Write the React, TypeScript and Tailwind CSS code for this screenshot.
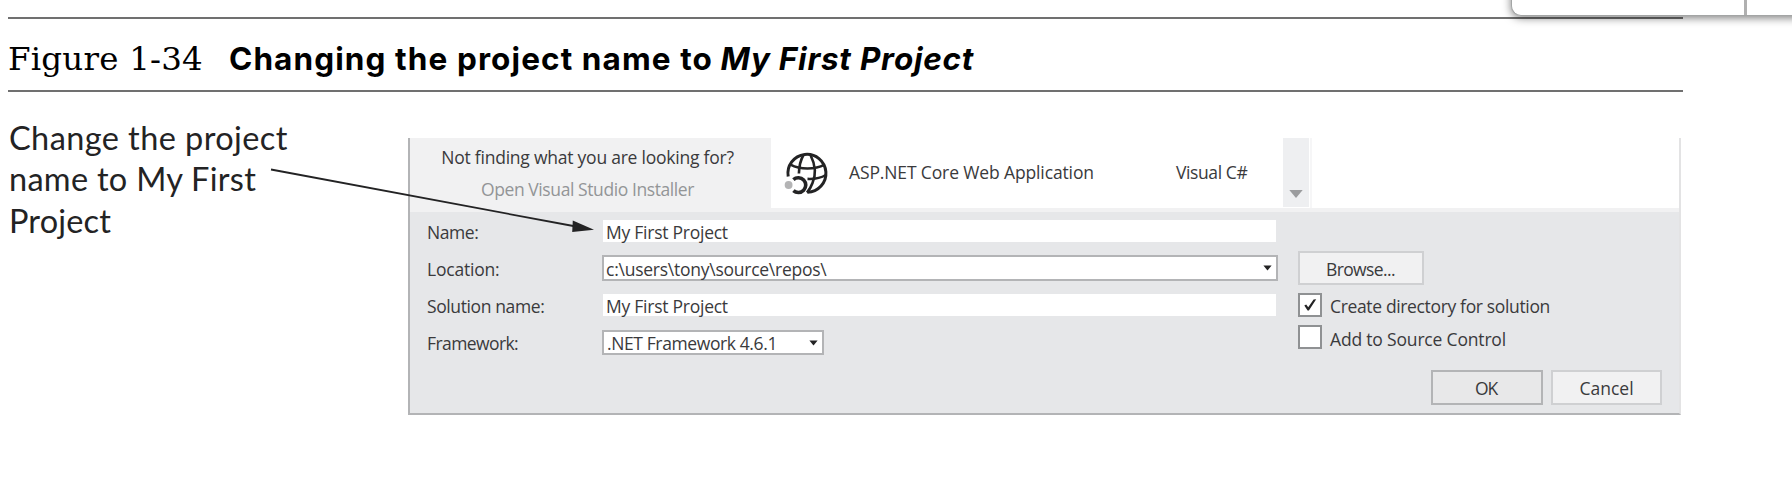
import type { ReactNode } from "react";

function GlobeIcon() {
  return (
    <svg viewBox="0 0 46 46" className="block h-[46px] w-[46px]" fill="none" stroke="#232324" strokeWidth="2.6">
      <path d="M5.2 26.5 A19 19 0 1 1 24.5 42.3" strokeWidth="3" />
      <path d="M20.5 5 C17.5 10 16.2 15 15.9 23.5" />
      <path d="M27.5 5 C32.5 15 33 25 29.5 33 C28.2 36.6 26.5 39.5 24 42.6" />
      <path d="M7.5 14.6 C17 19.8 32 19.8 41.5 14.6" />
      <path d="M24.5 28.9 C32 29.2 38 28 42.8 25" />
      <path d="M10.4 29.6 A7.4 7.4 0 1 1 10.4 40.6" strokeWidth="3.6" />
      <circle cx="5.6" cy="35" r="3.9" fill="#b4b4b5" stroke="none" />
    </svg>
  );
}

function Caret() {
  return (
    <svg viewBox="0 0 9 6" className="block h-[6px] w-[9px]">
      <path d="M0.4 0.6H8.6L4.5 5.4Z" fill="#232324" />
    </svg>
  );
}

function Row({ label, labelClass, className, children }: { label: string; labelClass: string; className: string; children: ReactNode }) {
  return (
    <div className={`flex items-center ${className}`}>
      <span className={`w-[175px] shrink-0 ${labelClass}`}>{label}</span>
      {children}
    </div>
  );
}

function Check({ checked, label, labelClass }: { checked?: boolean; label: string; labelClass: string }) {
  return (
    <div className="flex h-6 items-center">
      <span className="flex size-6 shrink-0 items-center justify-center border-2 border-[#8f9193] bg-white">
        {checked && (
          <svg viewBox="0 0 14 14" className="block size-[14px]">
            <path d="M1.3 7.6 L3.2 6.6 L5.2 9.2 L10.6 1.6 L13.2 1.2 L5.9 12.6 L4.6 12.6 Z" fill="#232324" />
          </svg>
        )}
      </span>
      <span className={`ml-[8px] ${labelClass}`}>{label}</span>
    </div>
  );
}

export default function App() {
  return (
    <div className="relative h-[492px] w-[1792px] overflow-hidden bg-white pt-[17px] whitespace-nowrap">
      <header className="ml-2 flex h-[75px] w-[1675px] items-baseline border-y-2 border-[#707070] pt-[16px] text-black">
        <span className="w-[221px] font-['DejaVu_Serif',serif] text-[32.5px] leading-[48px] tracking-[0.2px]">
          Figure 1-34
        </span>
        <h1 className="font-['Inter',sans-serif] text-[31.5px] leading-[48px] font-bold tracking-[1.1px]">
          Changing the project name to <em className="-ml-px tracking-[0.75px]">My First Project</em>
        </h1>
      </header>

      <main className="flex">
        <p className="flex w-[408px] flex-col pt-[25px] pl-[9px] font-['Lato',sans-serif] text-[32.5px] leading-[41.4px] text-[#232324]">
          <span className="tracking-[0.41px]">Change the project</span>
          <span className="tracking-[0.29px]">name to My First</span>
          <span className="tracking-[0.15px]">Project</span>
        </p>

        <section className="mt-[46px] flex h-[277px] w-[1273px] flex-col border-r-2 border-b-2 border-l-2 border-r-[#e3e3e4] border-b-[#b3b4b6] border-l-[#b3b4b6] font-['Open_Sans','Noto_Sans',sans-serif] text-[17.5px] leading-6 text-[#3a3a3c]">
          <div className="flex h-[74px] border-b-4 border-[#f1f1f2]">
            <div className="flex w-[361px] flex-col items-center gap-2 bg-[#f1f1f2] pt-[7px] pr-[6px]">
              <span className="tracking-[-0.23px]">Not finding what you are looking for?</span>
              <span className="tracking-[-0.41px] text-[#939597]">Open Visual Studio Installer</span>
            </div>
            <div className="flex flex-1">
              <div className="flex w-[512px] items-center pb-[2px]">
                <div className="ml-[12px] pt-px">
                  <GlobeIcon />
                </div>
                <span className="ml-[20px] w-[327px] tracking-[-0.13px]">ASP.NET Core Web Application</span>
                <span className="tracking-[-0.4px]">Visual C#</span>
              </div>
              <div className="flex h-[69px] w-[26px] items-end justify-center bg-[#eeeff1] pb-[9px]">
                <svg viewBox="0 0 14 8" className="block h-2 w-[14px]">
                  <path d="M0.3 0H13.7L7 8Z" fill="#9b9c9e" />
                </svg>
              </div>
              <div className="ml-px w-[2px] bg-[#f6f6f7]" />
            </div>
          </div>

          <div className="flex flex-1 bg-[#e6e7e9]">
            <div className="w-[888px] pl-[17px]">
              <Row label="Name:" labelClass="pt-[2px] tracking-[-0.45px]" className="h-[38px]">
                <div className="ml-px flex h-[22px] w-[673px] items-center bg-white pt-[2px] pl-[3px] tracking-[-0.25px]">My First Project</div>
              </Row>
              <Row label="Location:" labelClass="pt-[2px] tracking-[-0.2px]" className="h-[36px]">
                <div className="flex h-[26px] w-[676px] items-center justify-between border-2 border-[#b3b4b6] bg-white pr-[4px] pl-[2px] tracking-[-0.25px]">
                  <span className="pt-[2px]">{"c:\\users\\tony\\source\\repos\\"}</span>
                  <Caret />
                </div>
              </Row>
              <Row label="Solution name:" labelClass="pt-[2px] tracking-[-0.39px]" className="h-[38px]">
                <div className="ml-px flex h-[22px] w-[673px] items-center bg-white pt-[2px] pl-[3px] tracking-[-0.25px]">My First Project</div>
              </Row>
              <Row label="Framework:" labelClass="tracking-[-0.59px]" className="h-[37px]">
                <div className="flex h-[25px] w-[222px] items-center justify-between border-2 border-[#b3b4b6] bg-white pr-[4px] pl-[3px] tracking-[-0.39px]">
                  <span className="pt-px">.NET Framework 4.6.1</span>
                  <Caret />
                </div>
              </Row>
            </div>

            <div className="flex w-[364px] flex-col gap-2 pt-[39px]">
              <button className="h-[34px] w-[126px] border-2 border-[#cfd0d2] bg-[#f1f1f2] pt-[2px] pr-[1px] tracking-[-0.6px]">Browse...</button>
              <Check checked label="Create directory for solution" labelClass="pt-[2px] tracking-[-0.35px]" />
              <Check label="Add to Source Control" labelClass="pt-[4px] tracking-[-0.18px]" />
              <div className="mt-[13px] flex justify-end gap-2">
                <button className="h-[35px] w-[112px] border-2 border-[#b3b4b6] bg-[#e8e8e9] pr-[2px] tracking-[-1.2px]">OK</button>
                <button className="h-[35px] w-[111px] border-2 border-[#cfd0d2] bg-[#f1f1f2]">Cancel</button>
              </div>
            </div>
          </div>
        </section>
      </main>

      <svg viewBox="0 0 330 70" className="absolute top-[165px] left-[268px] h-[70px] w-[330px]">
        <path d="M3 4.5 L308 61.5" stroke="#232324" strokeWidth="1.8" />
        <path d="M304.8 55.5 L326 64.8 L304.2 67 Z" fill="#232324" />
      </svg>

      <div className="absolute top-[-20px] left-[1511px] flex h-[36px] w-[300px] rounded-bl-[10px] border-b border-l border-[#a3a5a5] bg-white shadow-[0_2px_8px_rgba(0,0,0,0.5)]">
        <div className="ml-[232px] w-[3px] bg-[#b0b0b0]" />
      </div>
    </div>
  );
}
